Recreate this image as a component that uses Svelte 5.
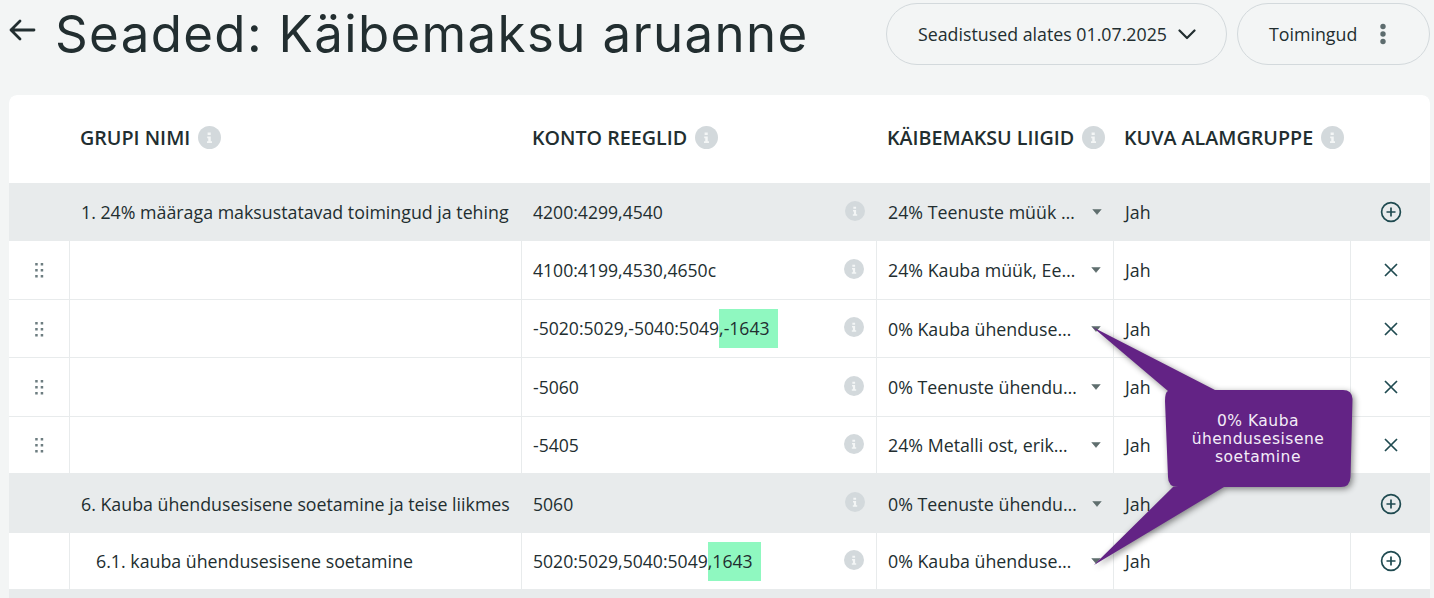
<script>
  const rows = [
    { kind: 'group', name: '1. 24% määraga maksustatavad toimingud ja tehing', rule: '4200:4299,4540', vat: '24% Teenuste müük Eesti', action: 'plus' },
    { kind: 'item', drag: true, rule: '4100:4199,4530,4650c', vat: '24% Kauba müük, Eesti', action: 'x' },
    { kind: 'item', drag: true, rule: '-5020:5029,-5040:5049', mark: ',-1643', vat: '0% Kauba ühendusesisene soetamine', action: 'x' },
    { kind: 'item', drag: true, rule: '-5060', vat: '0% Teenuste ühendusesisene', action: 'x' },
    { kind: 'item', drag: true, rule: '-5405', vat: '24% Metalli ost, erikord', action: 'x' },
    { kind: 'group', name: '6. Kauba ühendusesisene soetamine ja teise liikmes', rule: '5060', vat: '0% Teenuste ühendusesisene', action: 'plus' },
    { kind: 'item', sub: '6.1. kauba ühendusesisene soetamine', rule: '5020:5029,5040:5049', mark: ',1643', vat: '0% Kauba ühendusesisene soetamine', action: 'plus' }
  ];
  const headers = [
    { label: 'GRUPI NIMI' },
    { label: 'KONTO REEGLID' },
    { label: 'KÄIBEMAKSU LIIGID' },
    { label: 'KUVA ALAMGRUPPE' }
  ];
</script>

{#snippet info(size)}
  <svg class="info" width={size} height={size} viewBox="0 0 22 22" aria-hidden="true">
    <circle cx="11" cy="11" r="11" fill="#d3d9dc" />
    <path d="M9.2 6.2h3v2.4h-3zM8.8 10h3.4v4.6h1.2v1.6H8.6v-1.6h1.2v-3H8.8z" fill="#f4f6f6" />
  </svg>
{/snippet}

<div class="page">
  <header class="top">
    <button class="back" aria-label="Tagasi">
      <svg width="28" height="24" viewBox="0 0 28 24"><path d="M26 12H3M12 3l-9 9 9 9" fill="none" stroke="#222e30" stroke-width="2.8" stroke-linecap="round" stroke-linejoin="round" /></svg>
    </button>
    <h1>Seaded: Käibemaksu aruanne</h1>
    <div class="actions">
      <button class="pill date">
        Seadistused alates 01.07.2025
        <svg width="18" height="11" viewBox="0 0 18 11"><path d="M1.5 1.5 9 9l7.500-7.500" fill="none" stroke="#222e30" stroke-width="2.200" stroke-linecap="round" stroke-linejoin="round" /></svg>
      </button>
      <button class="pill tools">
        Toimingud
        <svg width="8" height="22" viewBox="0 0 8 22"><g fill="#5d6c6e"><circle cx="4" cy="3.500" r="2.700" /><circle cx="4" cy="11" r="2.700" /><circle cx="4" cy="18.500" r="2.700" /></g></svg>
      </button>
    </div>
  </header>

  <section class="card">
    <div class="head-cell"></div>
    {#each headers as h}
      <div class="head-cell"><span>{h.label}</span>{@render info(23)}</div>
    {/each}
    <div class="head-cell"></div>

    {#each rows as r}
      <div class="row {r.kind}">
        <div class="cell handle">
          {#if r.drag}
            <svg width="10" height="16" viewBox="0 0 10 16"><g fill="#6d7d80"><rect x="1.200" y="1" width="2.500" height="2.500" /><rect x="6.700" y="1" width="2.500" height="2.500" /><rect x="1.200" y="7" width="2.500" height="2.500" /><rect x="6.700" y="7" width="2.500" height="2.500" /><rect x="1.200" y="13" width="2.500" height="2.500" /><rect x="6.700" y="13" width="2.500" height="2.500" /></g></svg>
          {/if}
        </div>
        <div class="cell name" class:sub={r.sub}>{r.name ?? r.sub ?? ''}</div>
        <div class="cell rule">
          <span class="rule-text">{r.rule}{#if r.mark}<mark>{r.mark}</mark>{/if}</span>
          {@render info(20)}
        </div>
        <div class="cell vat">
          <span class="vat-text">{r.vat}</span>
          <svg class="caret" width="10" height="6" viewBox="0 0 10 6"><path d="M.8.4h8.400L5 5.400z" fill="#5f6e6e" stroke="#5f6e6e" stroke-width=".6" stroke-linejoin="round" /></svg>
        </div>
        <div class="cell show">Jah</div>
        <div class="cell act">
          {#if r.action === 'plus'}
            <svg width="22" height="22" viewBox="0 0 22 22"><circle cx="11" cy="11" r="9.400" fill="none" stroke="#1f4a50" stroke-width="1.700" /><path d="M11 6.500v9M6.500 11h9" stroke="#1f4a50" stroke-width="1.700" /></svg>
          {:else}
            <svg width="16" height="16" viewBox="0 0 16 16"><path d="M2 2l12 12M14 2 2 14" stroke="#1f4a50" stroke-width="1.700" /></svg>
          {/if}
        </div>
      </div>
    {/each}
    <div class="tail"></div>
  </section>

  <aside class="tip">
    <svg class="tip-shape" width="290" height="270" viewBox="1085 320 290 270" aria-hidden="true">
      <path d="M1092.500 327 1215 390H1343Q1352 390 1352.500 399L1350.500 477Q1350 487 1341 487H1224L1094 565 1173 487H1178Q1168 487 1168 477L1165 401Q1165 392 1168 391Z" fill="#632385" />
    </svg>
    <p>0% Kauba ühendusesisene soetamine</p>
  </aside>
</div>

<style>
  :global(body) {
    margin: 0;
    background: #f3f5f5;
  }
  .page {
    position: relative;
    height: 598px;
    overflow: hidden;
    background: #f3f5f5;
    color: #222e30;
    font-family: "Open Sans", "Liberation Sans", sans-serif;
    font-size: 17.8px;
  }
  .top {
    height: 95px;
    display: flex;
    align-items: flex-start;
    box-sizing: border-box;
    padding: 3px 4px 0 8px;
  }
  button {
    font: inherit;
    color: inherit;
    background: none;
    border: 0;
    padding: 0;
  }
  .back {
    width: 28px;
    height: 24px;
    margin-top: 15px;
  }
  h1 {
    margin: 2px 0 0 19px;
    font-family: "Inter", "Liberation Sans", sans-serif;
    font-size: 51px;
    line-height: 58px;
    letter-spacing: 1.35px;
    font-weight: 400;
    white-space: nowrap;
  }
  .actions {
    margin-left: auto;
    display: flex;
    gap: 10px;
  }
  .pill {
    height: 62px;
    box-sizing: border-box;
    border: 1px solid #d3d9dc;
    border-radius: 31px;
    display: flex;
    align-items: center;
    white-space: nowrap;
  }
  .date {
    width: 341px;
    padding-left: 31px;
    gap: 11px;
  }
  .tools {
    width: 193px;
    padding-left: 31px;
    gap: 22px;
  }
  .card {
    margin-left: 9px;
    width: 1421px;
    height: 503px;
    background: #e8ebec;
    border-radius: 8px 8px 0 0;
    overflow: hidden;
    display: grid;
    grid-template-columns: 61px 452px 355px 237px 237px 79px;
    grid-template-rows: 88px 58px 59px 58px 59px 57px 59px 57px 1fr;
  }
  .head-cell {
    background: #fff;
    display: flex;
    align-items: center;
    gap: 8px;
    font-weight: 600;
    font-size: 19.7px;
    padding: 0 0 4px 10px;
    white-space: nowrap;
    box-sizing: border-box;
    min-width: 0;
  }
  .row {
    display: contents;
  }
  .cell {
    display: flex;
    align-items: center;
    box-sizing: border-box;
    min-width: 0;
    overflow: hidden;
    white-space: nowrap;
    padding-left: 11px;
  }
  .item .cell {
    background: #fff;
    border-bottom: 1px solid #e8ebec;
    border-right: 1px solid #e8ebec;
  }
  .item .cell:last-child {
    border-right: 0;
  }
  .group .cell {
    background: #e8ebec;
  }
  .handle {
    justify-content: center;
    padding-left: 0;
  }
  .cell.sub {
    padding-left: 26px;
  }
  .rule {
    justify-content: space-between;
    padding-right: 12px;
    font-size: 17.6px;
  }
  .rule .info {
    margin-top: -3px;
  }
  mark {
    display: inline-block;
    background: #8ff8c0;
    color: inherit;
    padding: 10px 8.500px 10px 0;
    line-height: 19px;
  }
  .vat {
    padding-right: 12px;
    gap: 13px;
  }
  .vat-text {
    flex: 1;
    min-width: 0;
    overflow: hidden;
    text-overflow: ellipsis;
  }
  .caret {
    flex: none;
  }
  .show {
    padding-left: 11px;
  }
  .act {
    justify-content: center;
    padding-left: 0;
  }
  .tail {
    grid-column: 1 / -1;
    background: #e8ebec;
  }
  .info {
    flex: none;
  }
  .tip {
    position: absolute;
    left: 1085px;
    top: 320px;
    width: 290px;
    height: 270px;
  }
  .tip-shape {
    position: absolute;
    inset: 0;
    filter: drop-shadow(2px 2px 3px rgba(0, 0, 0, .45));
  }
  .tip p {
    position: absolute;
    left: 98px;
    top: 92px;
    width: 150px;
    margin: 0;
    color: #f4edf8;
    font-family: "DejaVu Sans", sans-serif;
    font-size: 15.500px;
    letter-spacing: .5px;
    line-height: 18px;
    text-align: center;
  }
</style>
